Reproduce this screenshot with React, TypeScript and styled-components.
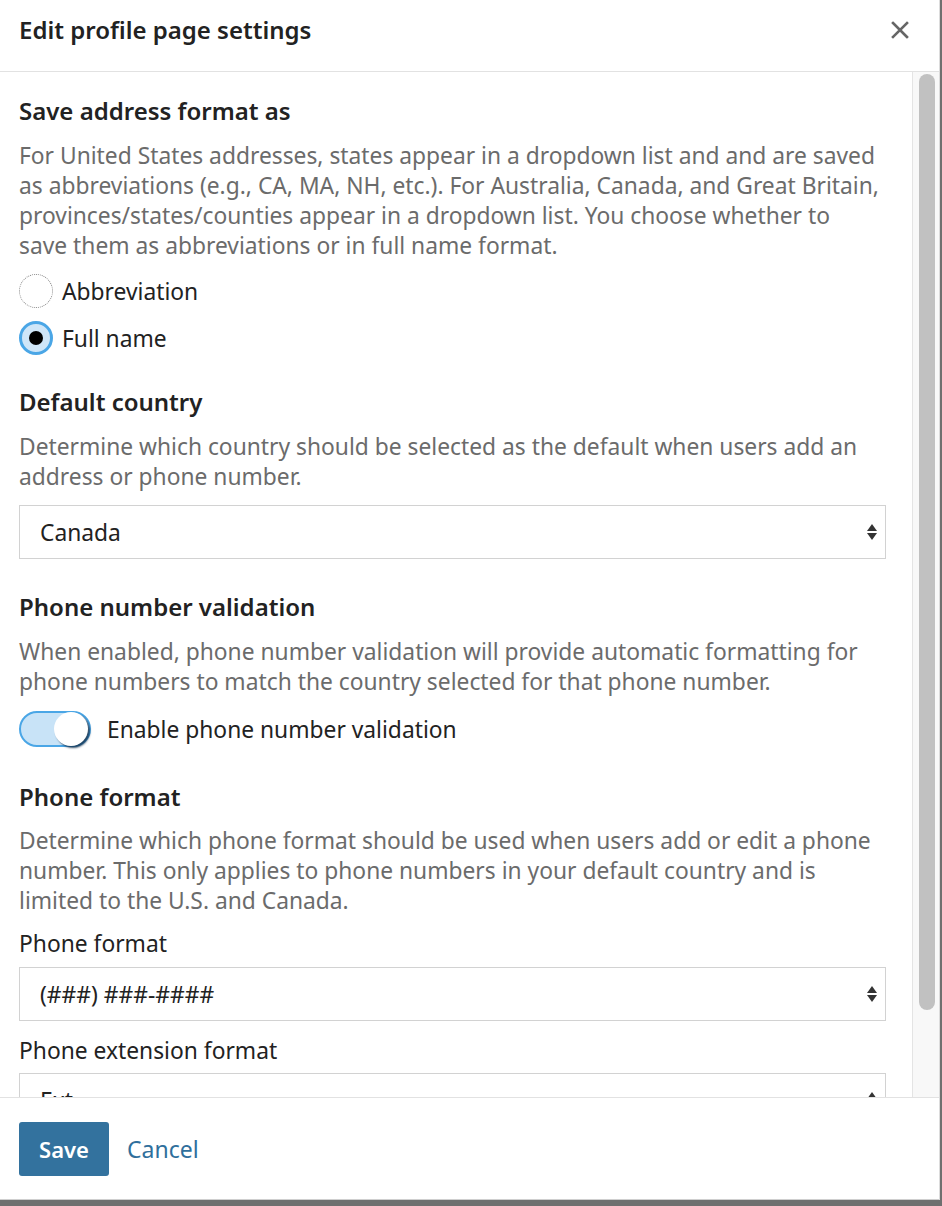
import React from "react";
import styled, {createGlobalStyle} from "styled-components";

const GlobalStyle = createGlobalStyle`
    html, body {
        margin: 0;
        padding: 0;
        background: #6f6f6f;
    }
    body {
        font-family: "Noto Sans", "Open Sans", sans-serif;
        color: #222;
    }
`

const Modal = styled.div`
    width: 940px;
    height: 1200px;
    background: #fff;
    border-right: 1px solid #dcdcdc;
    box-sizing: border-box;
    display: flex;
    flex-direction: column;
`

const Header = styled.div`
    height: 72px;
    box-sizing: border-box;
    border-bottom: 1px solid #e2e2e2;
    display: flex;
    align-items: flex-start;
    justify-content: space-between;
    padding: 15px 24px 0 19px;
    flex-shrink: 0;
`

const Title = styled.h1`
    margin: 0;
    font-size: 24px;
    line-height: 30px;
    font-weight: 600;
    color: #222;
`

const CloseButton = styled.button`
    border: none;
    background: none;
    padding: 0;
    width: 30px;
    height: 30px;
    display: flex;
    align-items: center;
    justify-content: center;
    cursor: pointer;
`

const BodyRow = styled.div`
    flex: 1;
    display: flex;
    min-height: 0;
`

const Body = styled.div`
    flex: 1;
    overflow: hidden;
    padding: 24px 26px 0 19px;
`

const ScrollTrack = styled.div`
    width: 27px;
    flex-shrink: 0;
    box-sizing: border-box;
    background: #f8f8f8;
    border-left: 1px solid #e4e4e4;
    padding: 2px 4px 0 6px;
`

const ScrollThumb = styled.div<{size: number}>`
    height: ${p => p.size}px;
    border-radius: 8px;
    background: #c1c1c1;
`

const Section = styled.section<{space?: number}>`
    margin-bottom: ${p => p.space ?? 0}px;
`

const Heading = styled.h2<{tight?: boolean}>`
    margin: 0 0 ${p => p.tight ? 14 : 15}px;
    font-size: 24px;
    line-height: 30px;
    font-weight: 600;
    color: #222;
`

const Description = styled.p<{flush?: boolean}>`
    margin: 0 0 ${p => p.flush ? 0 : 13}px;
    font-size: 22.8px;
    line-height: 30px;
    color: #6b6b6b;
`

const RadioGroup = styled.div`
    display: flex;
    flex-direction: column;
    gap: 13px;
`

const RadioRow = styled.label`
    display: flex;
    align-items: center;
    gap: 9px;
    font-size: 22.8px;
    color: #222;
    cursor: pointer;
`

const RadioCircle = styled.span<{checked: boolean}>`
    width: 34px;
    height: 34px;
    box-sizing: border-box;
    border-radius: 50%;
    display: flex;
    align-items: center;
    justify-content: center;
    border: ${p => p.checked ? "3px solid #4aa6e6" : "1px dotted #8a8a8a"};
    background: ${p => p.checked ? "#cfe6f8" : "#fff"};
    &::after{
        content: "";
        display: ${p => p.checked ? "block" : "none"};
        width: 14px;
        height: 14px;
        border-radius: 50%;
        background: #000;
    }
`

const SelectBox = styled.div`
    height: 54px;
    box-sizing: border-box;
    border: 1px solid #d2d2d2;
    display: flex;
    align-items: center;
    justify-content: space-between;
    padding: 0 8px 0 20px;
    font-size: 22.8px;
    color: #222;
    overflow: hidden;
`

const Arrows = styled.span`
    display: flex;
    flex-direction: column;
    gap: 2px;
    &::before, &::after{
        content: "";
        border-left: 5px solid transparent;
        border-right: 5px solid transparent;
    }
    &::before{
        border-bottom: 7px solid #333;
    }
    &::after{
        border-top: 7px solid #333;
    }
`

const ToggleRow = styled.label`
    display: flex;
    align-items: center;
    gap: 16px;
    margin-top: 14px;
    font-size: 22.8px;
    color: #222;
`

const ToggleTrack = styled.span<{on: boolean}>`
    width: 72px;
    height: 36px;
    box-sizing: border-box;
    border-radius: 18px;
    border: 2px solid #4aa6e6;
    background: ${p => p.on ? "#c8e3f7" : "#eee"};
    display: flex;
    align-items: center;
    justify-content: ${p => p.on ? "flex-end" : "flex-start"};
    padding: 0 1px;
`

const ToggleKnob = styled.span`
    width: 34px;
    height: 34px;
    border-radius: 50%;
    background: #fff;
    box-shadow: 2px 2px 2px rgba(20, 50, 80, 0.85);
`

const FieldLabel = styled.div<{first?: boolean}>`
    font-size: 22.8px;
    line-height: 30px;
    color: #222;
    margin: ${p => p.first ? "12px 0 8px" : "15px 0 7px"};
`

const Footer = styled.div`
    height: 103px;
    box-sizing: border-box;
    border-top: 1px solid #e2e2e2;
    border-bottom: 1px solid #cfcfcf;
    display: flex;
    align-items: center;
    gap: 18px;
    padding: 0 19px;
    flex-shrink: 0;
`

const SaveButton = styled.button`
    height: 54px;
    width: 90px;
    border: none;
    border-radius: 3px;
    background: #33729e;
    color: #fff;
    font-family: inherit;
    font-size: 22px;
    font-weight: 600;
    cursor: pointer;
`

const CancelLink = styled.a`
    color: #2f6f9c;
    font-size: 23px;
    text-decoration: none;
    cursor: pointer;
`

const CloseIcon = () => (
    <svg width="18" height="18" viewBox="0 0 18 18">
        <path d="M2 2 L16 16 M16 2 L2 16" stroke="#666" strokeWidth="2.6" strokeLinecap="square"/>
    </svg>
)

export default function App(){
    return(
        <>
            <GlobalStyle/>
            <Modal>
                <Header>
                    <Title>Edit profile page settings</Title>
                    <CloseButton aria-label="Close"><CloseIcon/></CloseButton>
                </Header>
                <BodyRow>
                    <Body>
                        <Section space={32}>
                            <Heading>Save address format as</Heading>
                            <Description>
                                For United States addresses, states appear in a dropdown list and and are saved as abbreviations (e.g., CA, MA, NH, etc.). For Australia, Canada, and Great Britain, provinces/states/counties appear in a dropdown list. You choose whether to save{"\u00a0"}them as abbreviations or in full name format.
                            </Description>
                            <RadioGroup>
                                <RadioRow><RadioCircle checked={false}/>Abbreviation</RadioRow>
                                <RadioRow><RadioCircle checked={true}/>Full name</RadioRow>
                            </RadioGroup>
                        </Section>
                        <Section space={33}>
                            <Heading>Default country</Heading>
                            <Description>
                                Determine which country should be selected as the default when users add an address or phone number.
                            </Description>
                            <SelectBox>Canada<Arrows/></SelectBox>
                        </Section>
                        <Section space={35}>
                            <Heading>Phone number validation</Heading>
                            <Description flush>
                                When enabled, phone number validation will provide automatic formatting for phone numbers to match the country selected for that phone number.
                            </Description>
                            <ToggleRow>
                                <ToggleTrack on={true}><ToggleKnob/></ToggleTrack>
                                Enable phone number validation
                            </ToggleRow>
                        </Section>
                        <Section>
                            <Heading tight>Phone format</Heading>
                            <Description>
                                Determine which phone format should be used when users add or edit a phone number. This only applies to phone numbers in your default country and is limited to the U.S. and Canada.
                            </Description>
                            <FieldLabel first>Phone format</FieldLabel>
                            <SelectBox>(###) ###-####<Arrows/></SelectBox>
                            <FieldLabel>Phone extension format</FieldLabel>
                            <SelectBox>Ext.<Arrows/></SelectBox>
                        </Section>
                    </Body>
                    <ScrollTrack>
                        <ScrollThumb size={936}/>
                    </ScrollTrack>
                </BodyRow>
                <Footer>
                    <SaveButton>Save</SaveButton>
                    <CancelLink>Cancel</CancelLink>
                </Footer>
            </Modal>
        </>
    )
}
